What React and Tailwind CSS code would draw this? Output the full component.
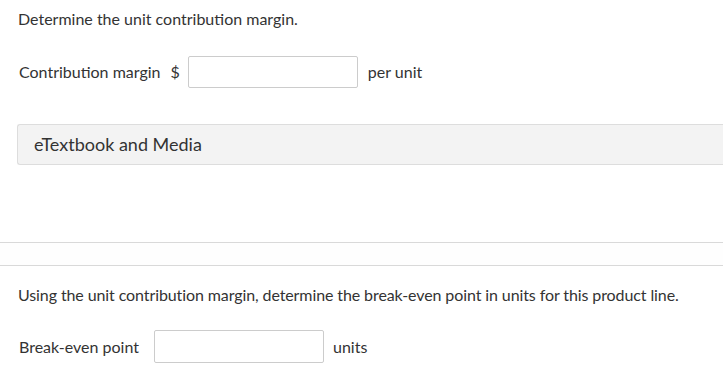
export default function App() {
  return (
    <div className="w-[723px] h-[377px] overflow-hidden bg-white text-[#333] font-['Lato','Liberation_Sans',sans-serif]">
      {/* Part 1 */}
      <div className="pl-[18px] pt-[8px]">
        <p className="text-[16px] leading-[22px]">Determine the unit contribution margin.</p>
        <div className="flex items-center mt-[26px] pl-px h-[32px]">
          <span className="text-[16px]">Contribution margin</span>
          <span className="text-[16px] ml-[10px]">$</span>
          <input className="ml-[8px] w-[170px] h-[32px] border border-[#ccc] rounded-[2px] outline-none" />
          <span className="text-[16px] ml-[10px]">per unit</span>
        </div>
      </div>

      <div className="ml-[17px] mt-[36px] h-[41px] flex items-center pl-[16px] bg-[#f3f3f3] border border-[#ddd] border-r-0 rounded-l-[3px]">
        <span className="text-[18px]">eTextbook and Media</span>
      </div>

      <div className="mt-[77px] h-[24px] border-t border-b border-[#d9d9d9] bg-[#fefefe]" />

      {/* Part 2 */}
      <div className="pl-[18px] pt-[18px]">
        <p className="text-[16px] leading-[22px] tracking-[-0.1px]">Using the unit contribution margin, determine the break-even point in units for this product line.</p>
        <div className="flex items-center mt-[24px] pl-px h-[33px]">
          <span className="text-[16px]">Break-even point</span>
          <input className="ml-[15px] w-[170px] h-[33px] border border-[#ccc] rounded-[2px] outline-none" />
          <span className="text-[16px] ml-[9px]">units</span>
        </div>
      </div>
    </div>
  )
}
